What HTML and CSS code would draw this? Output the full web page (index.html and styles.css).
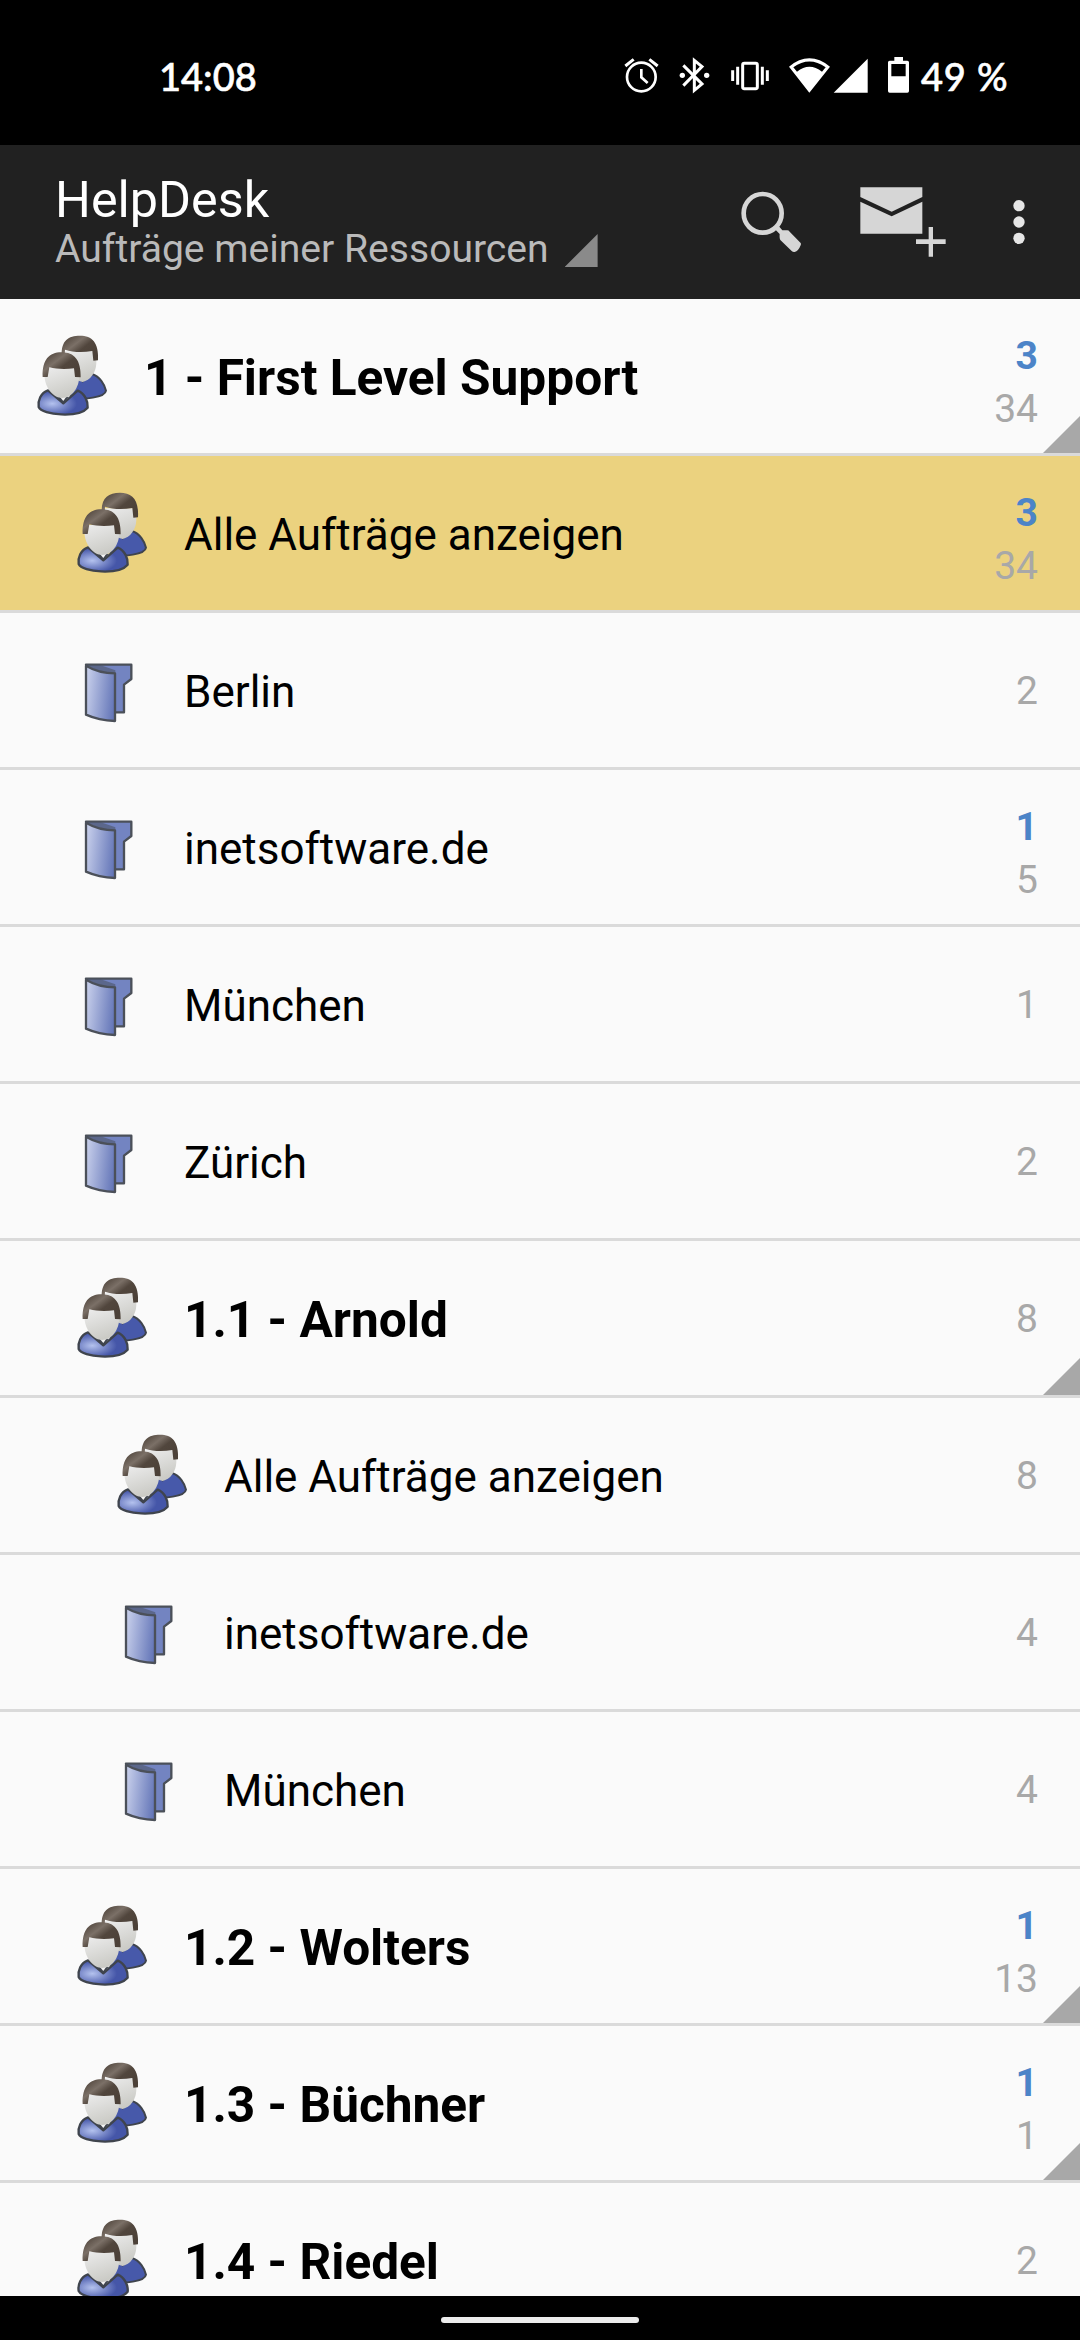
FILE: index.html
```html
<!doctype html>
<html lang="de">
<head>
	<meta charset="UTF-8">
	<title>HelpDesk</title>
	<link rel="stylesheet" href="styles.css">
</head>
<body>
	<svg class="defs">
		<defs>
			<linearGradient id="hair" x1="0" y1="0.2" x2="0.8" y2="0.9">
				<stop offset="0" stop-color="#51463d"/>
				<stop offset="0.35" stop-color="#7b7067"/>
				<stop offset="0.6" stop-color="#51463d"/>
				<stop offset="1" stop-color="#4c4138"/>
			</linearGradient>
			<linearGradient id="face" x1="0" y1="0" x2="0.4" y2="1">
				<stop offset="0" stop-color="#ececec"/>
				<stop offset="1" stop-color="#cbcbc6"/>
			</linearGradient>
			<radialGradient id="shirt" cx="0.28" cy="0.55" r="0.5">
				<stop offset="0" stop-color="#b4c2ee"/>
				<stop offset="1" stop-color="#4556a8"/>
			</radialGradient>
			<linearGradient id="cover" x1="0" y1="0.4" x2="1" y2="0.6">
				<stop offset="0" stop-color="#c5cdea"/>
				<stop offset="1" stop-color="#6476b8"/>
			</linearGradient>
		</defs>
		<symbol id="users" viewBox="0 0 300 330">
			<path d="M150 220C150 190 160 172 178 167L188 184L216 162C240 170 254 194 258 212C255 233 190 240 155 232Z" fill="#4759aa" stroke="#3f444d" stroke-width="6" stroke-linejoin="round"/>
			<path d="M133 94H229V130C228 158 210 182 188 186C160 182 140 150 133 94Z" fill="url(#face)"/>
			<path d="M125 104C124 62 145 47 180 47C216 47 237 67 234 121L220 122L217 93C188 98 158 97 135 89L134 106Z" fill="url(#hair)"/>
			<path d="M84 211C62 218 53 243 56 261C67 286 176 295 203 263C205 245 194 220 173 212L130 250Z" fill="url(#shirt)" stroke="#3f444d" stroke-width="7" stroke-linejoin="round"/>
			<path d="M112 230L128 252L146 230Z" fill="#3f444d"/>
			<path d="M119 230H139L130 243Z" fill="#f4f4f4"/>
			<path d="M76 144H178V166C178 204 155 234 127 234C99 234 75 204 73 166Z" fill="url(#face)"/>
			<path d="M68 171C66 119 88 97 124 97C164 97 183 121 182 172L165 171L162 145C140 148 110 148 88 142L83 171Z" fill="url(#hair)"/>
		</symbol>
		<symbol id="folder" viewBox="0 -17 300 330">
			<path d="M78 75H214V118L192 135V218H166L120 160Z" fill="#7384c1" stroke="#4b5059" stroke-width="7" stroke-linejoin="round"/>
			<path d="M80 75H118L166 92V101C130 98 98 88 80 75Z" fill="#4b5368" opacity="0.6"/>
			<path d="M78 78C105 94 135 101 165 101V244C132 243 102 236 78 225Z" fill="url(#cover)" stroke="#4b5059" stroke-width="7" stroke-linejoin="round"/>
		</symbol>
	</svg>

	<div class="statusbar">
		<span class="clock">14:08</span>
		<svg class="alarm" viewBox="72 45 105 120" fill="none" stroke="#fff">
			<circle cx="124" cy="111" r="43" stroke-width="8"/>
			<path d="M124 87V112L143 129" stroke-width="8"/>
			<path d="M76 78L101 58M148 58L173 78" stroke-width="9"/>
		</svg>
		<svg class="bluetooth" viewBox="237 45 93 120" fill="none" stroke="#fff">
			<path d="M250 76L306 132L283 151V61L306 80L250 137" stroke-width="9"/>
			<g fill="#fff" stroke="none"><circle cx="247" cy="106" r="8"/><circle cx="320" cy="106" r="8"/></g>
		</svg>
		<svg class="vibrate" viewBox="390 45 120 120" fill="none" stroke="#fff">
			<rect x="428" y="70" width="44" height="76" rx="5" stroke-width="9"/>
			<path d="M413 80V134M487 80V134" stroke-width="9"/>
			<path d="M398 91V123M502 91V123" stroke-width="9"/>
		</svg>
		<svg class="wifi" viewBox="567 45 123 120" fill="#fff">
			<path fill-rule="evenodd" d="M567 80Q628 30 690 80L628 158ZM580 82L591 95Q628 65 666 95L677 82Q628 47 580 82Z"/>
		</svg>
		<svg class="signal" viewBox="699 45 105 120" fill="#fff">
			<path d="M701 158L803 56V158Z"/>
		</svg>
		<svg class="battery" viewBox="861 45 69 120" fill="#fff">
			<path fill-rule="evenodd" d="M883 51H909V62H922Q927 62 927 67V153Q927 158 922 158H869Q864 158 864 153V67Q864 62 869 62H883ZM874 72V109H917V72Z"/>
		</svg>
		<span class="percent">49 %</span>
	</div>

	<div class="actionbar">
		<div class="titles">
			<div class="title">HelpDesk</div>
			<div class="subtitle">Aufträge meiner Ressourcen <i class="spinner"></i></div>
		</div>
		<svg class="search" viewBox="120 99 186 240">
			<ellipse cx="188" cy="190" rx="57" ry="58" fill="none" stroke="#d6d6d6" stroke-width="14"/>
			<path d="M222 235L234 226L247 241H262Q266 241 269 245L302 279Q304 282 302 286Q295 304 284 306Q279 307 275 303L241 270Q238 266 239 252Z" fill="#d6d6d6"/>
		</svg>
		<svg class="newmail" viewBox="480 99 258 240" fill="#d6d6d6">
			<path d="M481 112H667V141L575 185L481 141Z"/>
			<path d="M481 155L575 199L667 155V251H481Z"/>
			<path d="M686 231H699V268H737V282H699V320H686V282H648V268H686Z"/>
		</svg>
		<svg class="more" viewBox="939 99 36 240" fill="#e6e6e6">
			<circle cx="957" cy="167" r="17"/><circle cx="957" cy="216" r="17"/><circle cx="957" cy="265" r="17"/>
		</svg>
	</div>

	<div class="list">
		<div class="row group">
			<svg class="icon"><use href="#users"/></svg>
			<span class="name">1 - First Level Support</span>
			<div class="counts"><b>3</b><span>34</span></div>
			<i class="expand"></i>
		</div>
		<div class="row level1 selected">
			<svg class="icon"><use href="#users"/></svg>
			<span class="name">Alle Aufträge anzeigen</span>
			<div class="counts"><b>3</b><span>34</span></div>
		</div>
		<div class="row level1">
			<svg class="icon"><use href="#folder"/></svg>
			<span class="name">Berlin</span>
			<div class="counts"><span>2</span></div>
		</div>
		<div class="row level1">
			<svg class="icon"><use href="#folder"/></svg>
			<span class="name">inetsoftware.de</span>
			<div class="counts"><b>1</b><span>5</span></div>
		</div>
		<div class="row level1">
			<svg class="icon"><use href="#folder"/></svg>
			<span class="name">München</span>
			<div class="counts"><span>1</span></div>
		</div>
		<div class="row level1">
			<svg class="icon"><use href="#folder"/></svg>
			<span class="name">Zürich</span>
			<div class="counts"><span>2</span></div>
		</div>
		<div class="row group level1">
			<svg class="icon"><use href="#users"/></svg>
			<span class="name">1.1 - Arnold</span>
			<div class="counts"><span>8</span></div>
			<i class="expand"></i>
		</div>
		<div class="row level2">
			<svg class="icon"><use href="#users"/></svg>
			<span class="name">Alle Aufträge anzeigen</span>
			<div class="counts"><span>8</span></div>
		</div>
		<div class="row level2">
			<svg class="icon"><use href="#folder"/></svg>
			<span class="name">inetsoftware.de</span>
			<div class="counts"><span>4</span></div>
		</div>
		<div class="row level2">
			<svg class="icon"><use href="#folder"/></svg>
			<span class="name">München</span>
			<div class="counts"><span>4</span></div>
		</div>
		<div class="row group level1">
			<svg class="icon"><use href="#users"/></svg>
			<span class="name">1.2 - Wolters</span>
			<div class="counts"><b>1</b><span>13</span></div>
			<i class="expand"></i>
		</div>
		<div class="row group level1">
			<svg class="icon"><use href="#users"/></svg>
			<span class="name">1.3 - Büchner</span>
			<div class="counts"><b>1</b><span>1</span></div>
			<i class="expand"></i>
		</div>
		<div class="row group level1">
			<svg class="icon"><use href="#users"/></svg>
			<span class="name">1.4 - Riedel</span>
			<div class="counts"><span>2</span></div>
		</div>
	</div>

	<div class="navbar"><div class="handle"></div></div>
</body>
</html>
```
FILE: styles.css
```css
*{
	margin: 0;
	box-sizing: border-box;
}
body{
	display: flex;
	flex-direction: column;
	width: 1080px;
	height: 2340px;
	overflow: hidden;
	background: #fafafa;
	font-family: Roboto, sans-serif;
}
.defs{
	position: absolute;
	width: 0;
	height: 0;
}

/* status bar */
.statusbar{
	display: flex;
	flex: none;
	align-items: flex-start;
	height: 145px;
	padding: 55px 0 0 159px;
	background: #000;
	color: #fff;
	font: 500 38px/43px Lato, sans-serif;
	-webkit-text-stroke: 0.6px #fff;
}
.statusbar svg{
	flex: none;
	height: 40px;
}
.clock{
	width: 465px;
}
.alarm{
	width: 35px;
	margin-right: 20px;
}
.bluetooth{
	width: 31px;
	margin-right: 20px;
}
.vibrate{
	width: 40px;
	margin-right: 19px;
}
.wifi{
	width: 41px;
	margin-right: 3px;
}
.signal{
	width: 35px;
	margin-right: 19px;
}
.battery{
	width: 23px;
	margin-right: 11px;
}
.percent{
	letter-spacing: 0.8px;
	white-space: nowrap;
}

/* action bar */
.actionbar{
	display: flex;
	flex: none;
	align-items: center;
	height: 154px;
	padding: 0 55px;
	background: #212121;
}
.titles{
	flex: 1;
}
.title{
	color: #fff;
	font-size: 50.3px;
	line-height: 54px;
}
.subtitle{
	display: flex;
	color: #bababa;
	font-size: 39.1px;
	line-height: 44px;
}
.spinner{
	width: 33px;
	height: 33px;
	margin: 7px 0 0 16px;
	background: #8a8a8a;
	clip-path: polygon(100% 0, 100% 100%, 0 100%);
}
.actionbar svg{
	height: 80px;
	margin-top: 2px;
}
.search{
	width: 62px;
	margin-right: 58px;
}
.newmail{
	width: 86px;
	margin-right: 67px;
}
.more{
	width: 12px;
}

/* tree list */
.list{
	flex: 1;
	min-height: 0;
	overflow: hidden;
}
.row{
	display: flex;
	position: relative;
	align-items: center;
	height: 157px;
	padding: 0 42px 0 20px;
	border-bottom: 3px solid #dadada;
}
.level1{
	padding-left: 60px;
}
.level2{
	padding-left: 100px;
}
.selected{
	background: #ebd27f;
	background-clip: padding-box;
}
.icon{
	flex: none;
	width: 100px;
	height: 110px;
	margin: 0 24px 2px 0;
}
.name{
	flex: 1;
	padding-top: 4px;
	color: #000;
	font-size: 44px;
}
.group .name{
	padding-top: 3px;
	font-size: 49.6px;
	font-weight: bold;
}
.counts{
	display: flex;
	flex-direction: column;
	padding-top: 3px;
	color: #a8a8a8;
	font-size: 39px;
	line-height: 53px;
	text-align: right;
}
.counts b{
	padding-top: 5px;
	color: #4c84c8;
}
.counts b + span{
	margin-bottom: -5px;
}
.expand{
	position: absolute;
	right: 0;
	bottom: 0;
	width: 37px;
	height: 37px;
	background: #a8a8a8;
	clip-path: polygon(100% 0, 100% 100%, 0 100%);
}

/* gesture bar */
.navbar{
	display: flex;
	flex: none;
	justify-content: center;
	height: 44px;
	padding-top: 21px;
	background: #000;
}
.handle{
	width: 198px;
	height: 6px;
	border-radius: 3px;
	background: #ebebeb;
}
```
